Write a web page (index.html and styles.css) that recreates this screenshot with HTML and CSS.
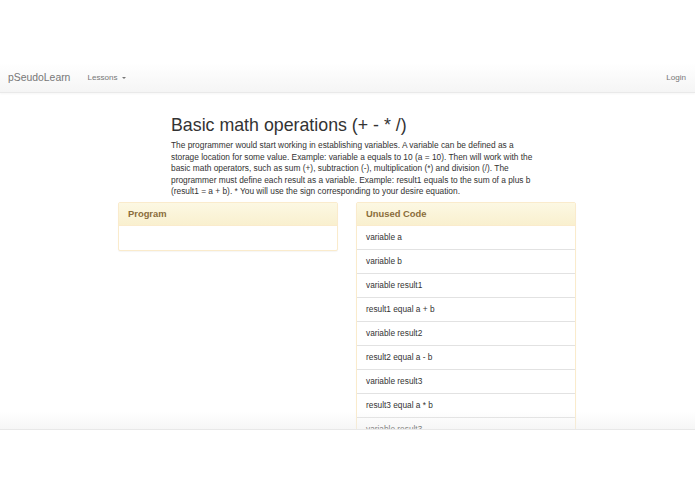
FILE: index.html
```html
<!DOCTYPE html>
<html lang="en">
<head>
<meta charset="utf-8">
<title>pSeudoLearn</title>
<link rel="stylesheet" href="styles.css">
</head>
<body>
<div class="top-gap"></div>
<div class="viewport">
  <nav class="navbar">
    <div class="nav-left">
      <span class="brand">pSeudoLearn</span>
      <span class="nav-link">Lessons <span class="caret"></span></span>
    </div>
    <span class="nav-link">Login</span>
  </nav>
  <main class="content">
    <section class="intro">
      <h1 class="title">Basic math operations (+ - * /)</h1>
      <p class="desc">The programmer would start working in establishing variables. A variable can be defined as a storage location for some value. Example: variable a equals to 10 (a = 10). Then will work with the basic math operators, such as sum (+), subtraction (-), multiplication (*) and division (/). The programmer must define each result as a variable. Example: result1 equals to the sum of a plus b (result1 = a + b). * You will use the sign corresponding to your desire equation.</p>
    </section>
    <div class="panels">
      <div class="panel">
        <div class="panel-heading">Program</div>
        <div class="panel-body"></div>
      </div>
      <div class="panel">
        <div class="panel-heading">Unused Code</div>
        <ul class="list">
          <li class="item">variable a</li>
          <li class="item">variable b</li>
          <li class="item">variable result1</li>
          <li class="item">result1 equal a + b</li>
          <li class="item">variable result2</li>
          <li class="item">result2 equal a - b</li>
          <li class="item">variable result3</li>
          <li class="item">result3 equal a * b</li>
          <li class="item">variable result3</li>
        </ul>
      </div>
    </div>
  </main>
  <div class="fade"></div>
</div>
</body>
</html>
```

FILE: styles.css
```css
html, body {
  margin: 0;
  padding: 0;
  background: #fff;
}
body {
  font-family: "Liberation Sans", Arial, sans-serif;
  color: #333;
}
.top-gap {
  height: 63px;
}
.viewport {
  position: relative;
  height: 367px;
  overflow: hidden;
  background: #fff;
}
.navbar {
  height: 29px;
  display: flex;
  align-items: center;
  justify-content: space-between;
  padding: 0 9px 0 8px;
  background: linear-gradient(to bottom, #ffffff 0%, #f5f5f5 100%);
  border-bottom: 1px solid #e9e9e9;
  box-shadow: 0 1px 2px rgba(0, 0, 0, 0.04);
}
.nav-left {
  display: flex;
  align-items: center;
  gap: 17px;
}
.brand {
  font-size: 10.4px;
  color: #777;
}
.nav-link {
  font-size: 8.1px;
  color: #777;
  display: inline-flex;
  align-items: center;
}
.caret {
  display: inline-block;
  width: 0;
  height: 0;
  margin-left: 4px;
  border-top: 2.5px solid #777;
  border-left: 2.5px solid transparent;
  border-right: 2.5px solid transparent;
}
.content {
  padding-top: 21px;
}
.intro {
  margin-left: 171px;
  width: 362px;
}
.title {
  margin: 0;
  font-size: 17.8px;
  line-height: 22px;
  font-weight: 500;
  color: #333;
}
.desc {
  margin: 4px 0 0;
  font-size: 8.35px;
  line-height: 11.6px;
  color: #333;
}
.panels {
  margin: 4px 0 0 118px;
  width: 458px;
  display: grid;
  grid-template-columns: 220px 220px;
  column-gap: 18px;
  align-items: start;
}
.panel {
  border: 1px solid #faebcc;
  border-radius: 2px;
  background: #fff;
  box-shadow: 0 1px 1px rgba(0, 0, 0, 0.04);
}
.panel-heading {
  height: 22px;
  padding: 0 9px;
  display: flex;
  align-items: center;
  font-size: 9.4px;
  font-weight: bold;
  color: #8a6d3b;
  background: linear-gradient(to bottom, #fcf8e3 0%, #f9f0cf 100%);
  border-bottom: 1px solid #faebcc;
}
.panel-body {
  height: 24px;
}
.list {
  list-style: none;
  margin: 0;
  padding: 0;
}
.item {
  height: 23px;
  padding: 0 9px;
  display: flex;
  align-items: center;
  font-size: 8.3px;
  color: #333;
  border-bottom: 1px solid #e2e2e2;
}
.fade {
  position: absolute;
  left: 0;
  right: 0;
  bottom: 0;
  height: 18px;
  background: linear-gradient(to bottom, rgba(238, 238, 238, 0) 0%, rgba(236, 236, 236, 0.45) 100%);
  border-bottom: 1px solid #e8e8e8;
}
```
